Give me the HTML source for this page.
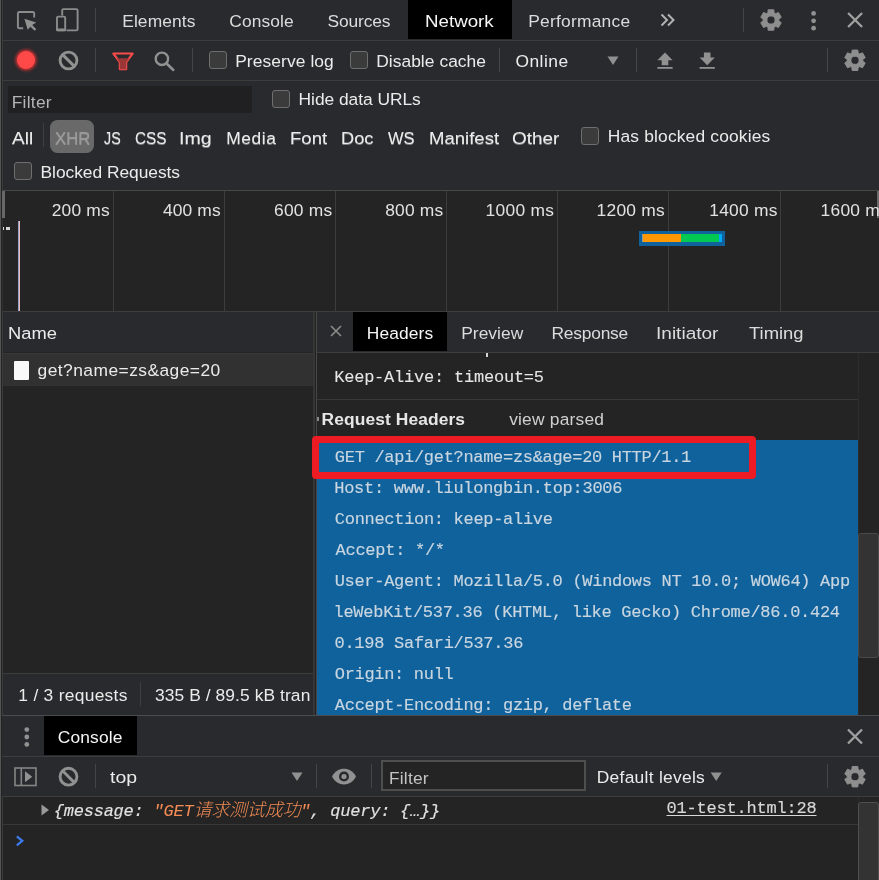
<!DOCTYPE html><html lang="zh"><head><meta charset="utf-8"><title>DevTools</title><style>
*{box-sizing:border-box;margin:0;padding:0}
html,body{width:879px;height:880px;overflow:hidden;background:#242424}
body{position:relative;font-family:'Liberation Sans', 'Noto Sans CJK SC', sans-serif;color:#dedede;-webkit-font-smoothing:antialiased}
.a{position:absolute}
.t{position:absolute;white-space:pre;line-height:24px;height:24px}
.m{-webkit-text-stroke:0.15px}
.bar{position:absolute;background:#292a2d}
.hl{position:absolute;height:1px;background:#3d3d3d}
.vl{position:absolute;width:1px;background:#3d3d3d}
.dv{position:absolute;width:1px;background:#454545}
.cb{position:absolute;width:18px;height:18px;border:1.5px solid #6e6e6e;border-radius:3px;background:#3b3b3b}
.ic{position:absolute;overflow:visible}
</style></head><body>
<!-- backgrounds -->
<div class="bar" style="left:0;top:0;width:879px;height:190px"></div>
<div class="hl" style="left:0;top:40px;width:879px"></div>
<div class="hl" style="left:0;top:80px;width:879px"></div>
<div class="a" style="left:408px;top:0;width:104px;height:39px;background:#000"></div>
<!-- filter input -->
<div class="a" style="left:8px;top:86px;width:244px;height:27px;background:#202023"></div>
<div class="a" style="left:50px;top:120px;width:44px;height:33px;border-radius:7.5px;background:#696969"></div>
<div class="dv" style="left:43px;top:123px;height:24px;background:#3f3f3f"></div>
<!-- overview -->
<div class="hl" style="left:0;top:190px;width:879px;background:#474747"></div>
<div class="vl" style="left:113px;top:191px;height:120px"></div>
<div class="vl" style="left:224px;top:191px;height:120px"></div>
<div class="vl" style="left:335px;top:191px;height:120px"></div>
<div class="vl" style="left:446px;top:191px;height:120px"></div>
<div class="vl" style="left:557px;top:191px;height:120px"></div>
<div class="vl" style="left:668px;top:191px;height:120px"></div>
<div class="vl" style="left:780px;top:191px;height:120px"></div>
<div class="a" style="left:877px;top:191px;width:2px;height:27px;background:#6a6a6a"></div>
<div class="a" style="left:3px;top:227px;width:1.2px;height:3px;background:#d8d8d8"></div>
<div class="a" style="left:5.5px;top:227px;width:4.8px;height:3px;background:#d8d8d8"></div>
<div class="a" style="left:18px;top:221px;width:1px;height:90px;background:#8fa3cf"></div>
<div class="a" style="left:19px;top:221px;width:1px;height:90px;background:#f3b9b9"></div>
<!-- waterfall bar -->
<div class="a" style="left:639px;top:231px;width:86px;height:15px;background:#10629d"></div>
<div class="a" style="left:641.5px;top:233.6px;width:1px;height:8.2px;background:#9a9a8a"></div>
<div class="a" style="left:642.5px;top:233.6px;width:38px;height:8.2px;background:#ff9800"></div>
<div class="a" style="left:680.5px;top:233.6px;width:38.5px;height:8.2px;background:#00c853"></div>
<div class="a" style="left:719px;top:233.6px;width:3px;height:8.2px;background:#03a9f4"></div>
<div class="hl" style="left:0;top:311px;width:879px"></div>
<!-- left pane -->
<div class="bar" style="left:2px;top:312px;width:312px;height:40px"></div>
<div class="hl" style="left:2px;top:352.5px;width:311px;background:#393939"></div>
<div class="a" style="left:2px;top:353.5px;width:311px;height:32.5px;background:#313131"></div>
<div class="a" style="left:13.5px;top:360.5px;width:15px;height:19.5px;background:#fafafa;border-radius:1px"></div>
<div class="hl" style="left:2px;top:673px;width:312px"></div>
<div class="bar" style="left:2px;top:674px;width:312px;height:41px"></div>
<div class="dv" style="left:140px;top:682px;height:24px;background:#3f3f3f"></div>
<!-- splitter -->
<div class="vl" style="left:313px;top:312px;width:2px;height:403px;background:#363636"></div>
<div class="vl" style="left:315px;top:312px;height:403px;background:#222"></div>
<div class="vl" style="left:316px;top:312px;height:403px;background:#474747"></div>
<!-- right pane -->
<div class="bar" style="left:317px;top:312px;width:562px;height:40px"></div>
<div class="a" style="left:353px;top:312px;width:94px;height:39px;background:#000"></div>
<div class="hl" style="left:317px;top:352px;width:562px"></div>
<div class="hl" style="left:317px;top:399px;width:541px;background:#383838"></div>
<div class="a" style="left:317px;top:440px;width:541px;height:275px;background:#10629d"></div>
<div class="a" style="left:312px;top:435.5px;width:444px;height:43.3px;border:7px solid #ed1c24;border-radius:4px"></div>
<!-- right scrollbar -->
<div class="a" style="left:858px;top:353px;width:21px;height:362px;background:#242424;border-left:1px solid #2c2c2c"></div>
<div class="a" style="left:858px;top:533px;width:21px;height:125px;background:#333;border:1px solid #4a4a4a;border-radius:3px"></div>
<!-- left strip -->
<div class="a" style="left:0;top:0;width:1px;height:880px;background:#545454"></div>
<div class="a" style="left:1px;top:0;width:1px;height:880px;background:#242424"></div>
<div class="a" style="left:2px;top:0;width:1px;height:880px;background:#3b3b3b"></div>
<div class="a" style="left:2px;top:191px;width:3px;height:27px;background:#686868"></div>
<div class="a" style="left:2px;top:218px;width:1px;height:93px;background:#2f2f2f"></div>
<!-- drawer -->
<div class="bar" style="left:2px;top:715px;width:877px;height:81px"></div>
<div class="hl" style="left:2px;top:715px;width:877px;background:#4a4c50"></div>
<div class="hl" style="left:2px;top:756px;width:877px"></div>
<div class="hl" style="left:2px;top:796px;width:877px"></div>
<div class="a" style="left:44px;top:716px;width:93px;height:39px;background:#000"></div>
<div class="a" style="left:381px;top:760px;width:205px;height:31px;border:2px solid #4e4e4e;background:#242424"></div>
<div class="hl" style="left:2px;top:824px;width:856px;background:#383838"></div>
<div class="a" style="left:858px;top:797px;width:21px;height:83px;background:#242424;border-left:1px solid #2b2b2b"></div>
<div class="a" style="left:858px;top:802px;width:21px;height:90px;background:#333;border:1px solid #4f4f4f;border-radius:3px"></div>
<!-- checkboxes -->
<div class="cb" style="left:209px;top:51px"></div>
<div class="cb" style="left:350px;top:51px"></div>
<div class="cb" style="left:272px;top:90px"></div>
<div class="cb" style="left:581px;top:126.5px"></div>
<div class="cb" style="left:14px;top:162px"></div>
<!-- toolbar dividers -->
<div class="dv" style="left:95px;top:8px;height:24px"></div>
<div class="dv" style="left:743px;top:8px;height:24px"></div>
<div class="dv" style="left:95px;top:48px;height:24px"></div>
<div class="dv" style="left:192px;top:48px;height:24px"></div>
<div class="dv" style="left:499px;top:48px;height:24px"></div>
<div class="dv" style="left:636px;top:48px;height:24px"></div>
<div class="dv" style="left:827px;top:48px;height:24px"></div>
<div class="dv" style="left:95px;top:764px;height:24px"></div>
<div class="dv" style="left:316px;top:764px;height:24px"></div>
<div class="dv" style="left:371px;top:764px;height:24px"></div>
<div class="dv" style="left:827px;top:764px;height:24px"></div>
<!-- ICONS -->
<svg class="ic" style="left:0;top:0" width="879" height="880" viewBox="0 0 879 880" fill="none">
<defs><filter id="blur" x="-50%" y="-50%" width="200%" height="200%"><feGaussianBlur stdDeviation="1.6"/></filter>
<g id="gear"><path fill="#8e8e8e" stroke="#8e8e8e" stroke-width="1" stroke-linejoin="round" fill-rule="evenodd" d="M-3.09,-7.27L-2.83,-10.21L2.83,-10.21L3.09,-7.27L4.75,-6.31L7.43,-7.56L10.26,-2.65L7.84,-0.96L7.84,0.96L10.26,2.65L7.43,7.56L4.75,6.31L3.09,7.27L2.83,10.21L-2.83,10.21L-3.09,7.27L-4.75,6.31L-7.43,7.56L-10.26,2.65L-7.84,0.96L-7.84,-0.96L-10.26,-2.65L-7.43,-7.56L-4.75,-6.31zM0,-4.1a4.1,4.1 0 1 0 0,8.2a4.1,4.1 0 1 0 0,-8.2z"/></g>
<g id="clear"><circle r="8.4" stroke="#919191" stroke-width="2.9"/><path d="M-5.9,-5.9L5.9,5.9" stroke="#919191" stroke-width="2.9"/></g>
<g id="x"><path d="M-7,-7L7,7M7,-7L-7,7" stroke="#a0a0a0" stroke-width="2.3"/></g>
<g id="dots"><circle cy="-7.4" r="2.4" fill="#919191"/><circle r="2.4" fill="#919191"/><circle cy="7.4" r="2.4" fill="#919191"/></g>
<g id="dd"><path d="M-5.5,-4h11L0,4.5z" fill="#919191"/></g>
</defs>
<!-- inspect icon -->
<path d="M23.2,28.3H19.2a1.3,1.3 0 0 1 -1.3,-1.3V13.3a1.3,1.3 0 0 1 1.3,-1.3H32.9a1.3,1.3 0 0 1 1.3,1.3V17.6" stroke="#8c8c8c" stroke-width="1.9"/>
<path d="M24.4,18.8L36.2,22.6L32.2,25.1L36.3,29.2L34.6,30.8L30.5,26.7L27.7,29.8z" fill="#919191"/>
<!-- device icon -->
<path d="M62.2,15.6V10.3a1.2,1.2 0 0 1 1.2,-1.2H76.4a1.2,1.2 0 0 1 1.2,1.2V29.2a1.2,1.2 0 0 1 -1.2,1.2H66.5" stroke="#8c8c8c" stroke-width="1.9"/>
<rect x="57" y="16.6" width="8.2" height="13.8" rx="1.2" stroke="#8c8c8c" stroke-width="1.9"/><rect x="56.1" y="28.6" width="10" height="2.7" rx="1" fill="#8c8c8c"/>
<!-- more tabs -->
<path d="M661.5,14.5L667,20L661.5,25.5M668,14.5L673.5,20L668,25.5" stroke="#b2b2b2" stroke-width="2"/>
<use href="#gear" x="771" y="20"/>
<use href="#dots" x="813.6" y="20.8"/>
<use href="#x" x="855.1" y="20"/>
<!-- record -->
<circle cx="26" cy="60" r="10.5" fill="#ff3030" opacity=".75" filter="url(#blur)"/>
<circle cx="26" cy="60" r="9" fill="#ff4949"/>
<use href="#clear" x="68.5" y="60.5"/>
<!-- filter funnel -->
<path d="M113.3,53.5H132.7L126.2,62.2V69.3H119.8V62.2z" stroke="#fa4b4b" stroke-width="2.1" stroke-linejoin="round" fill="none"/>
<path d="M116.8,58.2H129.2L126.2,62.2V69.3H119.8V62.2z" fill="#9a3636"/>
<!-- search -->
<circle cx="161.9" cy="58.8" r="6.2" stroke="#919191" stroke-width="2.4"/>
<path d="M166.3,63.2L174,70.6" stroke="#919191" stroke-width="2.7"/>
<use href="#dd" x="613" y="60.5"/>
<!-- upload -->
<path d="M665,52.5L672.6,60.3H668.3V65.2H661.7V60.3H657.4z" fill="#919191"/>
<rect x="657.4" y="67" width="15.2" height="1.8" fill="#919191"/>
<!-- download -->
<path d="M707.2,65.3L714.8,57.5H710.5V52.5H703.9V57.5H699.6z" fill="#919191"/>
<rect x="699.6" y="67" width="15.2" height="1.8" fill="#919191"/>
<use href="#gear" x="855" y="60.3"/>
<!-- detail close -->
<path d="M331,326L341,336M341,326L331,336" stroke="#8c8c8c" stroke-width="1.6"/>
<!-- drawer -->
<use href="#dots" x="26.8" y="737"/>
<use href="#x" x="855" y="736.5"/>
<!-- sidebar icon -->
<rect x="15" y="768" width="21" height="17.5" stroke="#858585" stroke-width="1.6"/>
<path d="M21.3,768V785.5" stroke="#858585" stroke-width="1.6"/>
<path d="M25,771.2L32.3,776.7L25,782.2z" fill="#919191"/>
<use href="#clear" x="68.5" y="776.7"/>
<use href="#dd" x="297" y="776.5"/>
<!-- eye -->
<path d="M332,776.5C337,766 351,766 356,776.5C351,787 337,787 332,776.5z" fill="#919191"/>
<circle cx="344" cy="776.5" r="5" fill="#292a2d"/>
<circle cx="344" cy="776.5" r="2.6" fill="#919191"/>
<use href="#dd" x="716.2" y="776.5"/>
<use href="#gear" x="855" y="776.7"/>
<!-- console expander + prompt -->
<path d="M41.5,804.5L49,810L41.5,815.5z" fill="#9a9a9a"/>
<path d="M16.8,836.3L22.3,840.8L16.8,845.3" stroke="#3b7cf0" stroke-width="2.2"/>
</svg>

<div id="labels" style="position:absolute;left:0;top:0;width:879px;height:880px;will-change:transform">
<div class="t" id="t_el" style="left:122.18px;top:9.00px;font-size:17.40px;letter-spacing:0.108px;color:#dcdcdc;">Elements</div>
<div class="t" id="t_co" style="left:229.31px;top:9.00px;font-size:17.40px;letter-spacing:0.082px;color:#dcdcdc;">Console</div>
<div class="t" id="t_so" style="left:327.55px;top:9.00px;font-size:17.40px;letter-spacing:-0.151px;color:#dcdcdc;">Sources</div>
<div class="t" id="t_ne" style="left:425.29px;top:9.00px;font-size:17.40px;letter-spacing:0.000px;color:#f6f6f6;transform:scaleX(1.0776);transform-origin:0 0;">Network</div>
<div class="t" id="t_pe" style="left:528.18px;top:9.00px;font-size:17.40px;letter-spacing:0.233px;color:#dcdcdc;">Performance</div>
<div class="t" id="c_pl" style="left:235.18px;top:48.75px;font-size:17.40px;letter-spacing:0.089px;color:#ebebeb;">Preserve log</div>
<div class="t" id="c_dc" style="left:376.18px;top:48.75px;font-size:17.40px;letter-spacing:0.048px;color:#ebebeb;">Disable cache</div>
<div class="t" id="c_on" style="left:515.48px;top:48.75px;font-size:17.40px;letter-spacing:0.475px;color:#ebebeb;">Online</div>
<div class="t" id="f_fi" style="left:11.72px;top:89.75px;font-size:17.40px;letter-spacing:0.259px;color:#b4b4b4;">Filter</div>
<div class="t" id="f_hd" style="left:298.57px;top:87.25px;font-size:17.40px;letter-spacing:-0.044px;color:#ebebeb;">Hide data URLs</div>
<div class="t" id="f_all" style="left:12.07px;top:126.00px;font-size:17.40px;letter-spacing:0.000px;color:#ebebeb;text-shadow:0 1px 0 rgba(255,255,255,.4);transform:scaleX(1.0942);transform-origin:0 0;">All</div>
<div class="t" id="f_xhr" style="left:54.72px;top:126.00px;font-size:17.40px;letter-spacing:0.000px;color:#9a9a9a;text-shadow:0 1px 0 rgba(255,255,255,.3);transform:scaleX(0.9666);transform-origin:0 0;">XHR</div>
<div class="t" id="f_js" style="left:103.76px;top:126.00px;font-size:17.40px;letter-spacing:0.000px;color:#ebebeb;text-shadow:0 1px 0 rgba(255,255,255,.4);transform:scaleX(0.8231);transform-origin:0 0;">JS</div>
<div class="t" id="f_css" style="left:135.39px;top:126.00px;font-size:17.40px;letter-spacing:0.000px;color:#ebebeb;text-shadow:0 1px 0 rgba(255,255,255,.4);transform:scaleX(0.8819);transform-origin:0 0;">CSS</div>
<div class="t" id="f_img" style="left:179.45px;top:126.00px;font-size:17.40px;letter-spacing:0.000px;color:#ebebeb;text-shadow:0 1px 0 rgba(255,255,255,.4);transform:scaleX(1.1253);transform-origin:0 0;">Img</div>
<div class="t" id="f_med" style="left:226.18px;top:126.00px;font-size:17.40px;letter-spacing:0.577px;color:#ebebeb;text-shadow:0 1px 0 rgba(255,255,255,.4);">Media</div>
<div class="t" id="f_fon" style="left:290.35px;top:126.00px;font-size:17.40px;letter-spacing:0.000px;color:#ebebeb;text-shadow:0 1px 0 rgba(255,255,255,.4);transform:scaleX(1.0688);transform-origin:0 0;">Font</div>
<div class="t" id="f_doc" style="left:341.37px;top:126.00px;font-size:17.40px;letter-spacing:0.000px;color:#ebebeb;text-shadow:0 1px 0 rgba(255,255,255,.4);transform:scaleX(1.0497);transform-origin:0 0;">Doc</div>
<div class="t" id="f_ws" style="left:388.16px;top:126.00px;font-size:17.40px;letter-spacing:0.000px;color:#ebebeb;text-shadow:0 1px 0 rgba(255,255,255,.4);transform:scaleX(0.9501);transform-origin:0 0;">WS</div>
<div class="t" id="f_man" style="left:429.35px;top:126.00px;font-size:17.40px;letter-spacing:0.000px;color:#ebebeb;text-shadow:0 1px 0 rgba(255,255,255,.4);transform:scaleX(1.0665);transform-origin:0 0;">Manifest</div>
<div class="t" id="f_oth" style="left:511.70px;top:126.00px;font-size:17.40px;letter-spacing:0.000px;color:#ebebeb;text-shadow:0 1px 0 rgba(255,255,255,.4);transform:scaleX(1.0904);transform-origin:0 0;">Other</div>
<div class="t" id="f_hbc" style="left:607.72px;top:123.50px;font-size:17.40px;letter-spacing:0.171px;color:#ebebeb;">Has blocked cookies</div>
<div class="t" id="f_br" style="left:40.57px;top:159.75px;font-size:17.40px;letter-spacing:-0.046px;color:#ebebeb;">Blocked Requests</div>
<div class="t" id="o_2" style="left:51.78px;top:197.75px;font-size:17.40px;letter-spacing:0.187px;color:#e2e2e2;">200 ms</div>
<div class="t" id="o_4" style="left:163.06px;top:197.75px;font-size:17.40px;letter-spacing:0.114px;color:#e2e2e2;">400 ms</div>
<div class="t" id="o_6" style="left:274.00px;top:197.75px;font-size:17.40px;letter-spacing:0.236px;color:#e2e2e2;">600 ms</div>
<div class="t" id="o_8" style="left:385.21px;top:197.75px;font-size:17.40px;letter-spacing:0.191px;color:#e2e2e2;">800 ms</div>
<div class="t" id="o_10" style="left:485.60px;top:197.75px;font-size:17.40px;letter-spacing:0.290px;color:#e2e2e2;">1000 ms</div>
<div class="t" id="o_12" style="left:596.60px;top:197.75px;font-size:17.40px;letter-spacing:0.228px;color:#e2e2e2;">1200 ms</div>
<div class="t" id="o_14" style="left:709.35px;top:197.75px;font-size:17.40px;letter-spacing:0.217px;color:#e2e2e2;">1400 ms</div>
<div class="t" id="o_16" style="left:820.60px;top:197.75px;font-size:17.40px;letter-spacing:0.228px;color:#e2e2e2;">1600 ms</div>
<div class="t" id="n_h" style="left:8.38px;top:320.75px;font-size:17.40px;letter-spacing:0.000px;color:#ebebeb;transform:scaleX(1.0525);transform-origin:0 0;">Name</div>
<div class="t" id="n_r" style="left:37.58px;top:358.00px;font-size:17.40px;letter-spacing:0.451px;color:#ebebeb;">get?name=zs&amp;age=20</div>
<div class="t" id="s_1" style="left:18.30px;top:682.70px;font-size:17.40px;letter-spacing:0.289px;color:#ebebeb;">1 / 3 requests</div>
<div class="t" id="s_2" style="left:154.97px;top:682.70px;font-size:17.40px;letter-spacing:0.085px;color:#ebebeb;width:155.4px;overflow:hidden;">335 B / 89.5 kB transferred</div>
<div class="t" id="d_he" style="left:366.72px;top:320.75px;font-size:17.40px;letter-spacing:0.114px;color:#f6f6f6;">Headers</div>
<div class="t" id="d_pr" style="left:461.18px;top:320.50px;font-size:17.40px;letter-spacing:0.041px;color:#dcdcdc;">Preview</div>
<div class="t" id="d_re" style="left:551.55px;top:320.50px;font-size:17.40px;letter-spacing:-0.237px;color:#dcdcdc;">Response</div>
<div class="t" id="d_in" style="left:655.57px;top:320.50px;font-size:17.40px;letter-spacing:0.000px;color:#dcdcdc;transform:scaleX(1.0953);transform-origin:0 0;">Initiator</div>
<div class="t" id="d_ti" style="left:748.62px;top:320.50px;font-size:17.40px;letter-spacing:0.000px;color:#dcdcdc;transform:scaleX(1.0600);transform-origin:0 0;">Timing</div>
<div class="t" id="d_rh" style="left:321.57px;top:407.00px;font-size:17.40px;letter-spacing:0.093px;color:#e6e6e6;font-weight:bold;">Request Headers</div>
<div class="t" id="d_vp" style="left:509.15px;top:407.00px;font-size:17.40px;letter-spacing:0.201px;color:#d0d0d0;">view parsed</div>
<div class="t m" id="m_ka" style="left:334.20px;top:365.60px;font-size:17.00px;letter-spacing:-0.219px;color:#e6e6e6;font-family:'Liberation Mono', 'Noto Sans CJK SC', monospace;-webkit-text-stroke:0.08px;">Keep-Alive: timeout=5</div>
<div class="t m" id="m_0" style="left:334.85px;top:445.60px;font-size:17.00px;letter-spacing:-0.310px;color:#c9d6e0;font-family:'Liberation Mono', 'Noto Sans CJK SC', monospace;">GET /api/get?name=zs&amp;age=20 HTTP/1.1</div>
<div class="t m" id="m_1" style="left:334.24px;top:476.60px;font-size:17.00px;letter-spacing:-0.273px;color:#c9d6e0;font-family:'Liberation Mono', 'Noto Sans CJK SC', monospace;">Host: www.liulongbin.top:3006</div>
<div class="t m" id="m_2" style="left:334.85px;top:507.60px;font-size:17.00px;letter-spacing:-0.304px;color:#c9d6e0;font-family:'Liberation Mono', 'Noto Sans CJK SC', monospace;">Connection: keep-alive</div>
<div class="t m" id="m_3" style="left:335.58px;top:538.60px;font-size:17.00px;letter-spacing:-0.273px;color:#c9d6e0;font-family:'Liberation Mono', 'Noto Sans CJK SC', monospace;">Accept: */*</div>
<div class="t m" id="m_4" style="left:334.65px;top:569.60px;font-size:17.00px;letter-spacing:-0.294px;color:#c9d6e0;font-family:'Liberation Mono', 'Noto Sans CJK SC', monospace;">User-Agent: Mozilla/5.0 (Windows NT 10.0; WOW64) App</div>
<div class="t m" id="m_5" style="left:333.50px;top:600.60px;font-size:17.00px;letter-spacing:-0.275px;color:#c9d6e0;font-family:'Liberation Mono', 'Noto Sans CJK SC', monospace;">leWebKit/537.36 (KHTML, like Gecko) Chrome/86.0.424</div>
<div class="t m" id="m_6" style="left:334.48px;top:631.60px;font-size:17.00px;letter-spacing:-0.275px;color:#c9d6e0;font-family:'Liberation Mono', 'Noto Sans CJK SC', monospace;">0.198 Safari/537.36</div>
<div class="t m" id="m_7" style="left:334.78px;top:662.60px;font-size:17.00px;letter-spacing:-0.315px;color:#c9d6e0;font-family:'Liberation Mono', 'Noto Sans CJK SC', monospace;">Origin: null</div>
<div class="t m" id="m_8" style="left:334.85px;top:693.60px;font-size:17.00px;letter-spacing:-0.310px;color:#c9d6e0;font-family:'Liberation Mono', 'Noto Sans CJK SC', monospace;">Accept-Encoding: gzip, deflate</div>
<div class="t" id="r_co" style="left:57.70px;top:724.50px;font-size:17.40px;letter-spacing:0.167px;color:#f6f6f6;">Console</div>
<div class="t" id="r_top" style="left:109.95px;top:765.00px;font-size:17.40px;letter-spacing:0.000px;color:#ebebeb;transform:scaleX(1.1173);transform-origin:0 0;">top</div>
<div class="t" id="r_fi" style="left:388.88px;top:766.00px;font-size:17.40px;letter-spacing:0.228px;color:#c4c4c4;">Filter</div>
<div class="t" id="r_dl" style="left:596.72px;top:765.00px;font-size:17.40px;letter-spacing:0.283px;color:#ebebeb;">Default levels</div>
<div class="t m" id="r_src" style="left:666.54px;top:796.60px;font-size:17.00px;letter-spacing:-0.205px;color:#d8d8d8;font-family:'Liberation Mono', 'Noto Sans CJK SC', monospace;text-decoration:underline;text-underline-offset:2px;">01-test.html:28</div>
<div class="t m" id="cmsg" style="left:53.71px;top:799.90px;font-size:17.00px;letter-spacing:-0.216px;color:#e2e2e2;font-family:'Liberation Mono', 'Noto Sans CJK SC', monospace;font-style:italic;">{message: <span style="color:#f28b54;-webkit-text-stroke:0.05px">"GET<span style="font-size:18px;line-height:0;font-weight:300;-webkit-text-stroke:0">请求测试成功</span>"</span>, query: {…}}</div>
</div>
<div class="a" style="left:486px;top:353px;width:2px;height:3.5px;background:#d4d4d4"></div>
<div class="a" style="left:317px;top:417px;width:1.5px;height:4px;background:#8a8a8a"></div>

</body></html>
